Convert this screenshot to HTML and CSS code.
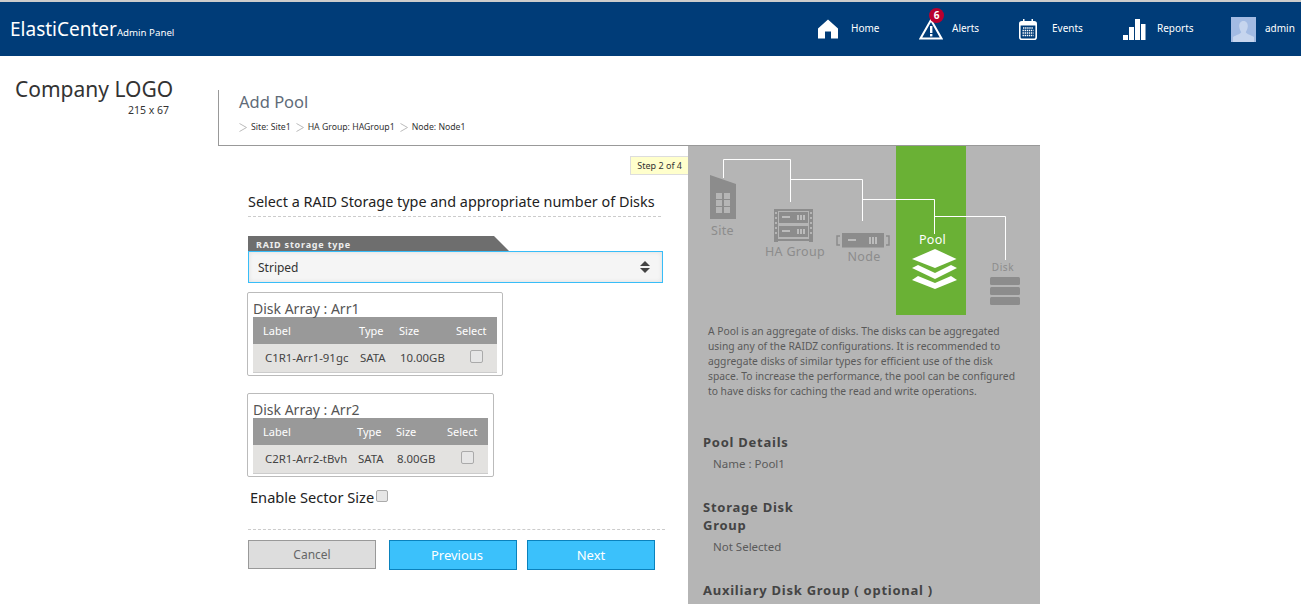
FILE: index.html
```html
<!DOCTYPE html>
<html lang="en">
<head>
    <meta charset="UTF-8">
    <title>ElastiCenter - Add Pool</title>
    <link rel="stylesheet" href="styles.css">
</head>
<body>
    <header class="top-bar">
        <div class="brand">ElastiCenter<small>Admin Panel</small></div>
        <nav class="top-nav">
            <a class="nav-item nav-home">
                <svg width="20" height="20" viewBox="0 0 20 20"><path d="M10 0.5 20 9.5V19.5H13V12.5H7V19.5H0V9.5Z" fill="#fff"/></svg>
                <span>Home</span>
            </a>
            <a class="nav-item nav-alerts">
                <svg width="24" height="22" viewBox="0 0 24 22"><path d="M12 2 22.5 20.5H1.5Z" fill="none" stroke="#fff" stroke-width="2"/><rect x="11" y="8" width="2.4" height="7" fill="#fff"/><rect x="11" y="16" width="2.4" height="2.4" fill="#fff"/></svg>
                <b class="badge">6</b>
                <span>Alerts</span>
            </a>
            <a class="nav-item nav-events">
                <svg width="18" height="21" viewBox="0 0 18 21"><rect x="0.8" y="2.8" width="16.4" height="17.4" rx="2" fill="none" stroke="#fff" stroke-width="1.6"/><rect x="1" y="3" width="16" height="3.5" fill="#fff"/><rect x="4" y="0" width="1.5" height="4" fill="#fff"/><rect x="12.5" y="0" width="1.5" height="4" fill="#fff"/><path d="M4 9H14M3.5 11.5H14.5M3.5 14H14.500M3.500 16.500H14.500" stroke="#fff" stroke-width="1.400" stroke-dasharray="1.400 .7"/></svg>
                <span>Events</span>
            </a>
            <a class="nav-item nav-reports">
                <svg width="23" height="21" viewBox="0 0 23 21"><rect x="0" y="16" width="5" height="5" fill="#fff"/><rect x="6" y="8" width="5" height="13" fill="#fff"/><rect x="12" y="0" width="5" height="21" fill="#fff"/><rect x="18" y="5" width="4.500" height="16" fill="#fff"/></svg>
                <span>Reports</span>
            </a>
            <a class="nav-item nav-user">
                <svg width="25" height="25" viewBox="0 0 25 25"><rect width="25" height="25" fill="#a3bbe3"/><path d="M12.500 4C15.500 4 17 6.500 16.800 9.500 16.600 12 15.500 14 14.800 15 15 17 20 18 23 20V25H2V20C5 18 10 17 10.200 15 9.500 14 8.400 12 8.200 9.500 8 6.500 9.500 4 12.500 4Z" fill="#c6d5ee"/></svg>
                <span>admin</span>
            </a>
        </nav>
    </header>

    <div class="page">
        <div class="logo-col">
            <div class="logo-name">Company LOGO</div>
            <div class="logo-size">215 x 67</div>
        </div>

        <div class="main-col">
            <div class="title-block">
                <h1>Add Pool</h1>
                <div class="crumbs">
                    <svg class="chev" width="8" height="9" viewBox="0 0 8 9"><path d="M0.500 0.500 7.500 4.500 0.500 8.500" fill="none" stroke="#bbb"/></svg><span>Site: Site1</span>
                    <svg class="chev" width="8" height="9" viewBox="0 0 8 9"><path d="M0.500 0.500 7.500 4.500 0.500 8.500" fill="none" stroke="#bbb"/></svg><span>HA Group: HAGroup1</span>
                    <svg class="chev" width="8" height="9" viewBox="0 0 8 9"><path d="M0.500 0.500 7.500 4.500 0.500 8.500" fill="none" stroke="#bbb"/></svg><span>Node: Node1</span>
                </div>
            </div>

            <div class="content">
                <section class="wizard">
                    <div class="step-row"><span class="step-tag">Step 2 of 4</span></div>
                    <h2 class="form-title">Select a RAID Storage type and appropriate number of Disks</h2>

                    <div class="raid-tab">RAID storage type</div>
                    <div class="select-wrap">
                        <select class="raid-select">
                            <option>Striped</option>
                        </select>
                    </div>

                    <div class="array-box array-one">
                        <div class="array-title">Disk Array : Arr1</div>
                        <table class="disk-table">
                            <tr><th class="c-label">Label</th><th class="c-type">Type</th><th class="c-size">Size</th><th class="c-select">Select</th></tr>
                            <tr><td>C1R1-Arr1-91gc</td><td>SATA</td><td>10.00GB</td><td class="c-check"><input type="checkbox"></td></tr>
                        </table>
                    </div>

                    <div class="array-box array-two">
                        <div class="array-title">Disk Array : Arr2</div>
                        <table class="disk-table">
                            <tr><th class="c-label">Label</th><th class="c-type">Type</th><th class="c-size">Size</th><th class="c-select">Select</th></tr>
                            <tr><td>C2R1-Arr2-tBvh</td><td>SATA</td><td>8.00GB</td><td class="c-check"><input type="checkbox"></td></tr>
                        </table>
                    </div>

                    <label class="sector-row">Enable Sector Size<input type="checkbox"></label>

                    <div class="button-row">
                        <button type="button" class="btn btn-cancel">Cancel</button>
                        <button type="button" class="btn btn-blue btn-prev">Previous</button>
                        <button type="button" class="btn btn-blue">Next</button>
                    </div>
                </section>

                <aside class="side-panel">
                    <svg class="diagram" width="352" height="169" viewBox="0 0 352 169">
                        <rect x="208" y="0" width="70" height="169" fill="#6ab135"/>
                        <!-- connector lines -->
                        <path d="M35.500 32V13.500H102.500V56M102.500 33.500H174.500V75M174.500 53.500H246.500V88M246.500 70.500H317.500V114" fill="none" stroke="#fff"/>
                        <!-- site -->
                        <path d="M22 29 48 38V73H22Z" fill="#8c8c8c"/>
                        <path d="M28 47h6v6h-6zM36 47h6v6h-6zM28 54h6v6h-6zM36 54h6v6h-6zM28 61h6v6h-6zM36 61h6v6h-6z" fill="#b5b5b5"/>
                        <text class="d-label" x="34.500" y="89" text-anchor="middle">Site</text>
                        <!-- ha group -->
                        <path d="M86 63h4v33h-4zM121 63h4v33h-4z" fill="#8c8c8c"/>
                        <path d="M91 66h29v11h-29zM91 80h29v11h-29z" fill="#8c8c8c"/>
                        <path d="M90 63h31v2h-31zM90 93h31v2h-31z" fill="#8c8c8c"/>
                        <path d="M87 66h2v2h-2zM87 71h2v2h-2zM87 76h2v2h-2zM87 81h2v2h-2zM87 86h2v2h-2zM122 66h2v2h-2zM122 71h2v2h-2zM122 76h2v2h-2zM122 81h2v2h-2zM122 86h2v2h-2z" fill="#b5b5b5"/>
                        <path d="M94 70h8v2h-8zM94 84h8v2h-8zM109 69h2v5h-2zM112 69h2v5h-2zM115 69h2v5h-2zM109 83h2v5h-2zM112 83h2v5h-2zM115 83h2v5h-2z" fill="#bcbcbc"/>
                        <text class="d-label" x="107" y="110" text-anchor="middle">HA Group</text>
                        <!-- node -->
                        <path d="M154 87h42v14.500h-42z" fill="#8c8c8c"/>
                        <path d="M160 93h8v2h-8zM181 91h2v7h-2zM184 91h2v7h-2zM187 91h2v7h-2z" fill="#bcbcbc"/>
                        <path d="M152 90h-3v9h3M198 90h3v9h-3" fill="none" stroke="#8c8c8c" stroke-width="1.500"/>
                        <text class="d-label" x="176" y="115" text-anchor="middle">Node</text>
                        <!-- pool -->
                        <text class="d-label d-pool" x="244.500" y="98" text-anchor="middle">Pool</text>
                        <path d="M247 103 268.500 113 247 122 224 113Z" fill="#fff"/>
                        <path d="M230 119 247 127 263 119 269 122 247 133 224 122Z" fill="#fff"/>
                        <path d="M230 130 247 137 263 130 269 134 247 143 224 134Z" fill="#fff"/>
                        <!-- disk -->
                        <text class="d-label d-disk" x="315" y="125" text-anchor="middle">Disk</text>
                        <rect x="302" y="131" width="30" height="8" rx="1.500" fill="#8c8c8c"/>
                        <rect x="302" y="141" width="30" height="8" rx="1.500" fill="#8c8c8c"/>
                        <rect x="302" y="151" width="30" height="8" rx="1.500" fill="#8c8c8c"/>
                    </svg>

                    <p class="pool-text">A Pool is an aggregate of disks. The disks can be aggregated using any of the RAIDZ configurations. It is recommended to aggregate disks of similar types for efficient use of the disk space. To increase the performance, the pool can be configured to have disks for caching the read and write operations.</p>

                    <h3 class="detail-head">Pool Details</h3>
                    <div class="detail-value">Name : Pool1</div>

                    <h3 class="detail-head detail-narrow">Storage Disk Group</h3>
                    <div class="detail-value">Not Selected</div>

                    <h3 class="detail-head">Auxiliary Disk Group ( optional )</h3>
                </aside>
            </div>
        </div>
    </div>
</body>
</html>
```

FILE: styles.css
```css
* {
    box-sizing: border-box;
}

html, body {
    margin: 0;
    height: 604px;
    overflow: hidden;
}

body {
    font-family: "Noto Sans", "Open Sans", sans-serif;
    background-color: #fff;
    color: #333;
}

/* top bar */
.top-bar {
    display: flex;
    align-items: center;
    justify-content: space-between;
    height: 56px;
    border-top: 2px solid #ccc;
    background-color: #003c78;
    color: #fff;
}

.brand {
    padding-left: 10px;
    font-size: 19px;
}

.brand small {
    font-size: 9.700px;
}

.top-nav {
    display: flex;
    align-items: center;
}

.nav-item {
    display: flex;
    align-items: center;
    position: relative;
    font-size: 10px;
}

.nav-item span {
    margin-bottom: 2px;
}

.nav-home { gap: 13px; width: 101px; }
.nav-alerts { gap: 9px; width: 100px; }
.nav-events { gap: 15px; width: 104px; }
.nav-reports { gap: 11px; width: 108px; }
.nav-user { gap: 9px; width: 70px; }

.badge {
    position: absolute;
    top: -10px;
    left: 10px;
    width: 15px;
    height: 15px;
    border-radius: 50%;
    background-color: #b8002e;
    font-size: 10px;
    line-height: 15px;
    text-align: center;
}

/* page */
.page {
    display: flex;
    height: 548px;
}

.logo-col {
    width: 218px;
    padding: 19px 49px 0 15px;
    flex-shrink: 0;
}

.logo-name {
    font-size: 21px;
    line-height: 29px;
    white-space: nowrap;
}

.logo-size {
    font-size: 10.500px;
    line-height: 12px;
    text-align: right;
}

.main-col {
    width: 822px;
    padding-top: 34px;
}

.title-block {
    height: 56px;
    padding: 0 0 0 20px;
    border-left: 1px solid #999;
    border-bottom: 1px solid #999;
}

.title-block h1 {
    margin: 0;
    font-size: 16.500px;
    font-weight: normal;
    line-height: 23px;
    color: #5f6b78;
}

.crumbs {
    display: flex;
    align-items: center;
    margin-top: 8px;
    font-size: 8.700px;
    line-height: 12px;
    color: #333;
}

.chev {
    margin-right: 4px;
}

.crumbs span {
    margin-right: 5px;
}

.content {
    display: flex;
    height: 458px;
}

/* wizard form */
.wizard {
    width: 470px;
    padding-left: 30px;
    flex-shrink: 0;
}

.step-row {
    display: flex;
    justify-content: flex-end;
    height: 46px;
    padding-top: 10px;
}

.step-tag {
    height: 19px;
    padding: 0 6px;
    border: 1px solid #ddd;
    border-right: 0;
    background-color: #ffffcc;
    font-size: 9px;
    line-height: 17px;
}

.form-title {
    width: 413px;
    height: 25px;
    margin: 0 0 19px;
    border-bottom: 1px dashed #ccc;
    font-size: 14.400px;
    font-weight: normal;
    line-height: 20px;
    color: #222;
    white-space: nowrap;
}

.raid-tab {
    width: 261px;
    height: 15px;
    padding-left: 8px;
    background-color: #6e6e6e;
    clip-path: polygon(0 0, 246px 0, 100% 100%, 0 100%);
    color: #eee;
    font-size: 9px;
    font-weight: bold;
    letter-spacing: .8px;
    line-height: 18px;
}

.select-wrap {
    position: relative;
    width: 415px;
    height: 32px;
}

.select-wrap::before,
.select-wrap::after {
    content: '';
    position: absolute;
    right: 13px;
    border-left: 5px solid transparent;
    border-right: 5px solid transparent;
    pointer-events: none;
}

.select-wrap::before {
    top: 10px;
    border-bottom: 5px solid #444;
}

.select-wrap::after {
    top: 17px;
    border-top: 5px solid #444;
}

.raid-select {
    appearance: none;
    width: 100%;
    height: 100%;
    padding-left: 9px;
    border: 1px solid #38bdf8;
    border-radius: 0;
    background-color: #f5f5f5;
    box-shadow: inset 0 0 4px #ddd;
    color: #333;
    font-family: inherit;
    font-size: 12px;
}

.array-box {
    margin-left: -1px;
    padding: 7px 5px 2px;
    border: 1px solid #bbb;
    border-radius: 2px;
}

.array-one {
    width: 256px;
    height: 84px;
    margin-top: 9px;
}

.array-two {
    width: 247px;
    height: 84px;
    margin-top: 17px;
}

.array-title {
    height: 17px;
    font-size: 14px;
    line-height: 17px;
    color: #555;
}

.disk-table {
    width: 100%;
    border-collapse: collapse;
    table-layout: fixed;
    font-size: 11.400px;
}

.disk-table th {
    height: 27px;
    background-color: #999;
    color: #fff;
    font-size: 11px;
    font-weight: normal;
    text-align: left;
}

.disk-table td {
    height: 28px;
    border-bottom: 1px solid #ccc;
    background-color: #e3e2e0;
    color: #444;
}

.disk-table th:first-child { padding-left: 10px; }
.disk-table td:first-child { padding-left: 12px; }

.array-one .c-label { width: 105px; }
.array-one .c-type { width: 40px; }
.array-one .c-size { width: 57px; }
.array-two .c-label { width: 103px; }
.array-two .c-type { width: 39px; }
.array-two .c-size { width: 51px; }

.disk-table td:nth-child(2),
.disk-table td:nth-child(3) {
    padding-left: 2px;
}

input[type="checkbox"] {
    appearance: none;
    width: 13px;
    height: 13px;
    margin: 0;
    border: 1px solid #aaa;
    border-radius: 2px;
    background-color: #e6e6e6;
}

.c-check {
    padding-left: 15px;
}

.sector-row {
    display: flex;
    align-items: flex-start;
    margin: 11px 0 0 2px;
    height: 21px;
    font-size: 14.600px;
    line-height: 18px;
    color: #222;
}

.sector-row input {
    margin-top: 2px;
    margin-left: 2px;
    width: 12px;
    height: 12px;
}

.button-row {
    display: flex;
    align-items: flex-start;
    width: 417px;
    margin-top: 20px;
    padding-top: 10px;
    border-top: 1px dashed #ccc;
}

.btn {
    width: 128px;
    font-family: inherit;
}

.btn-cancel {
    height: 29px;
    border: 1px solid #999;
    background-color: #ddd;
    color: #666;
    font-size: 12px;
}

.btn-blue {
    height: 30px;
    border: 1px solid #0a82bd;
    background-color: #3bc1fb;
    color: #fff;
    font-size: 13px;
    margin-left: 10px;
}

.btn-prev {
    margin-left: 13px;
    padding-left: 14px;
}

/* side panel */
.side-panel {
    width: 352px;
    background-color: #b5b5b5;
    color: #5a5a5a;
    flex-shrink: 0;
}

.diagram {
    display: block;
}

.d-label {
    font-size: 12.500px;
    fill: #8c8c8c;
    letter-spacing: .3px;
}

.d-pool {
    fill: #fff;
}

.d-disk {
    font-size: 10px;
    letter-spacing: .6px;
}

.pool-text {
    margin: 9px 0 0 20px;
    width: 314px;
    font-size: 10.300px;
    line-height: 15px;
}

.detail-head {
    margin: 34px 0 0 15px;
    font-size: 13px;
    letter-spacing: .75px;
    line-height: 18px;
    color: #444;
}

.detail-narrow {
    width: 110px;
    margin-top: 25px;
}

.detail-value {
    margin: 4px 0 0 25px;
    font-size: 11.500px;
    line-height: 18px;
}

.detail-value + .detail-narrow + .detail-value + .detail-head {
    margin-top: 25px;
}
```
